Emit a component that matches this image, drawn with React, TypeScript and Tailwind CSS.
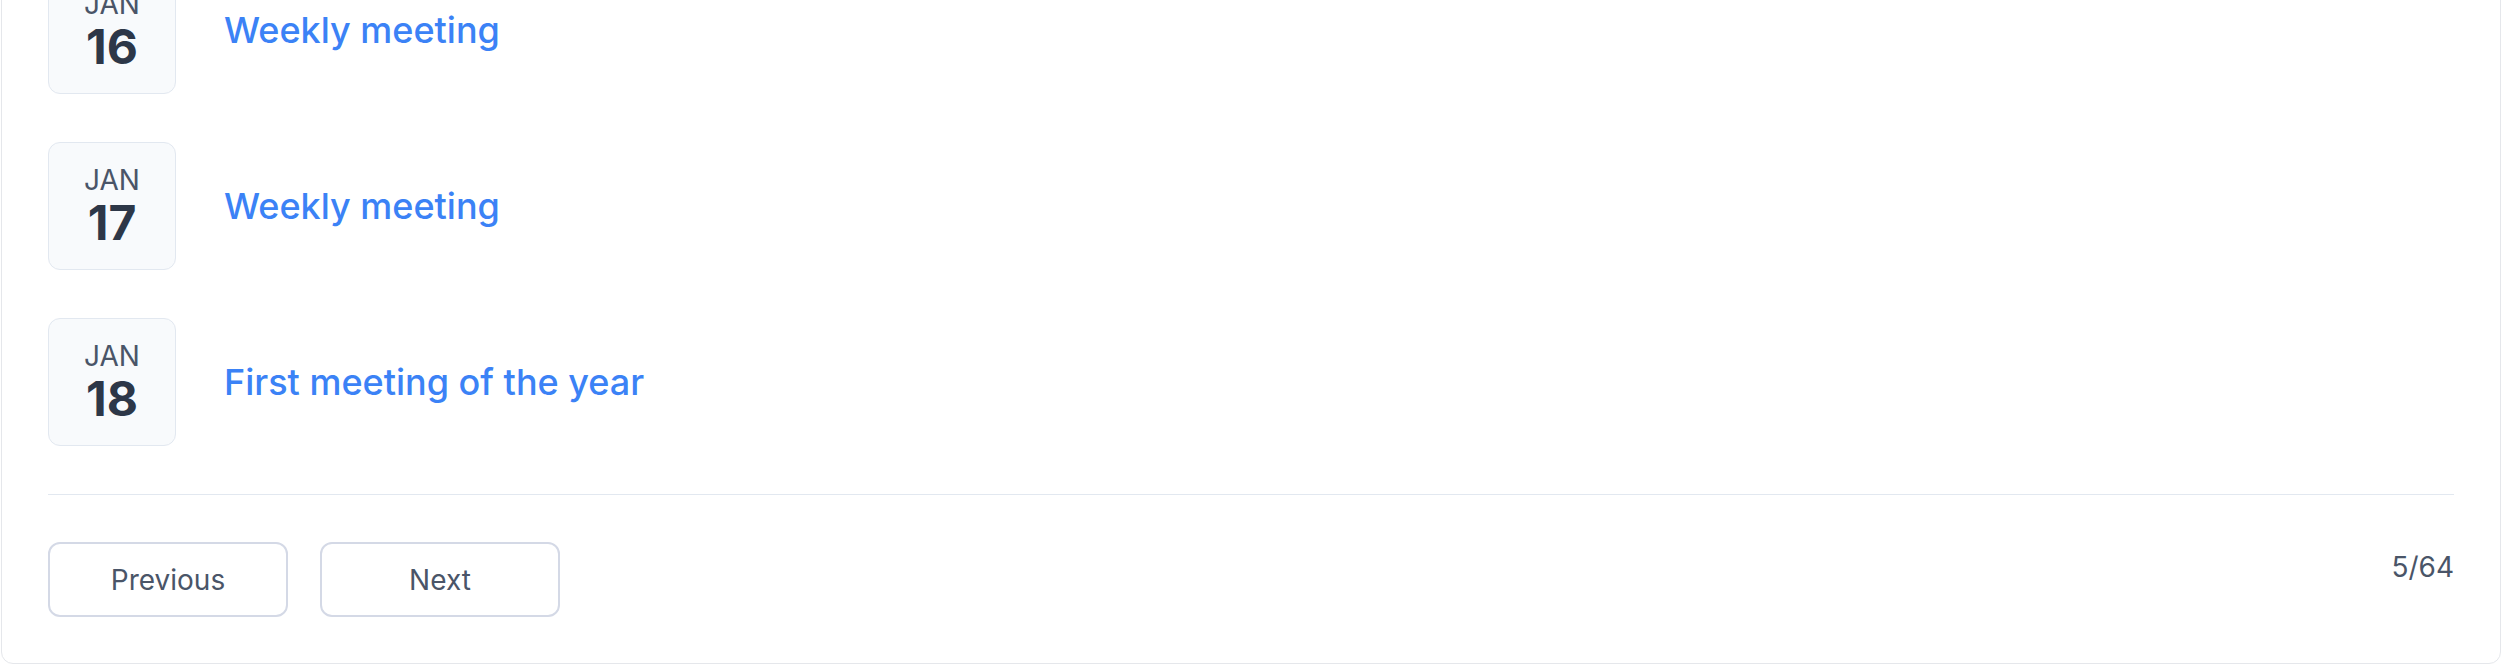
import React from "react";

const rows = [
  { month: "JAN", day: "16", title: "Weekly meeting" },
  { month: "JAN", day: "17", title: "Weekly meeting" },
  { month: "JAN", day: "18", title: "First meeting of the year" },
];

export default function App() {
  return (
    <div
      className="w-full h-[666px] overflow-hidden bg-white"
      style={{ fontFamily: "Inter, 'Noto Sans', sans-serif" }}
    >
      <div className="mx-px mb-[2px] -mt-[105px] rounded-xl border border-[#e5e7eb] bg-white px-[46px] pt-[46px] pb-[46px]">
        <div className="flex flex-col">
          {rows.map((r, i) => (
            <div key={i} className="flex items-center gap-12 py-6">
              <div className="flex h-[128px] w-[128px] shrink-0 flex-col items-center justify-center rounded-xl border border-[#e2e8f0] bg-[#f8fafc]">
                <span className="text-[28px] leading-none text-[#4a5568]">{r.month}</span>
                <span className="mt-[5px] text-[48px] font-bold leading-none text-[#2d3748]">{r.day}</span>
              </div>
              <a className="text-[36px] font-medium leading-none text-[#3b82f6]">{r.title}</a>
            </div>
          ))}
        </div>
        <div className="mt-6 h-px w-full bg-[#e2e8f0]" />
        <div className="flex items-start justify-between pt-[47px]">
          <div className="flex gap-8">
            <button className="h-[75px] w-[240px] rounded-xl border-2 border-[#d4d9e6] bg-white text-[28px] font-normal text-[#4a5568]">
              Previous
            </button>
            <button className="h-[75px] w-[240px] rounded-xl border-2 border-[#d4d9e6] bg-white text-[28px] font-normal text-[#4a5568]">
              Next
            </button>
          </div>
          <span className="mt-1 text-[28px] leading-[42px] text-[#4a5568]">5/64</span>
        </div>
      </div>
    </div>
  );
}
